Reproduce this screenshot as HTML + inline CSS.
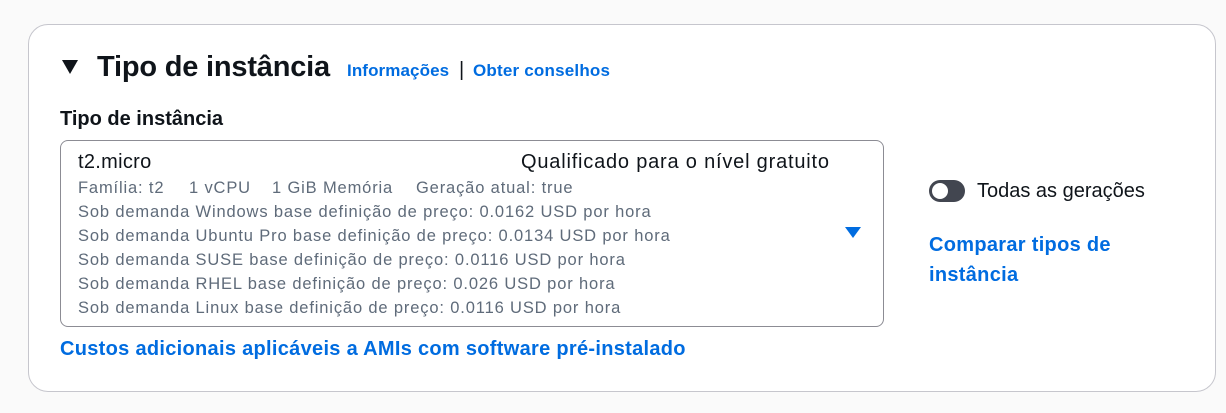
<!DOCTYPE html>
<html><head><meta charset="utf-8"><style>
body{margin:0;background:#fafafa;width:1226px;height:413px;overflow:hidden;font-family:"Liberation Sans",sans-serif;color:#0f141a;position:relative}
.card{position:absolute;left:28px;top:24px;width:1188px;height:368px;background:#fff;border:1px solid #c6c6cd;border-radius:20px;box-sizing:border-box}
.a{position:absolute;white-space:nowrap}
.blue{color:#006ce0;font-weight:bold}
.sel{position:absolute;left:60px;top:140px;width:824px;height:187px;border:1px solid #8c8c94;border-radius:8px;box-sizing:border-box}
.g{color:#5f6b7a;font-size:16.5px;position:absolute;left:78px;white-space:nowrap;letter-spacing:0.85px}
</style></head><body>
<div class="card"></div>
<svg class="a" style="left:61px;top:59px" width="18" height="16"><path d="M1 1H17L9 15Z" fill="#0f141a"/></svg>
<div class="a" style="left:97px;top:51px;font-size:29px;font-weight:bold;letter-spacing:-0.2px">Tipo de instância</div>
<div class="a blue" style="left:347px;top:61px;font-size:17px;letter-spacing:0.1px">Informações</div>
<div class="a" style="left:459px;top:59px;font-size:20px">|</div>
<div class="a blue" style="left:473px;top:61px;font-size:17px;letter-spacing:0.2px">Obter conselhos</div>
<div class="a" style="left:60px;top:108px;font-size:20px;font-weight:bold">Tipo de instância</div>
<div class="sel"></div>
<div class="a" style="left:78px;top:151px;font-size:20px;letter-spacing:0.3px">t2.micro</div>
<div class="a" style="left:521px;top:151px;font-size:20px;letter-spacing:0.8px">Qualificado para o nível gratuito</div>
<div class="g" style="top:179px">Família: t2</div>
<div class="g" style="top:179px;left:189px">1 vCPU</div>
<div class="g" style="top:179px;left:272px">1 GiB Memória</div>
<div class="g" style="top:179px;left:416px">Geração atual: true</div>
<div class="g" style="top:203px">Sob demanda Windows base definição de preço: 0.0162 USD por hora</div>
<div class="g" style="top:227px">Sob demanda Ubuntu Pro base definição de preço: 0.0134 USD por hora</div>
<div class="g" style="top:251px">Sob demanda SUSE base definição de preço: 0.0116 USD por hora</div>
<div class="g" style="top:275px">Sob demanda RHEL base definição de preço: 0.026 USD por hora</div>
<div class="g" style="top:299px">Sob demanda Linux base definição de preço: 0.0116 USD por hora</div>
<svg class="a" style="left:845px;top:227px" width="16" height="12"><path d="M0 0H16L8 11Z" fill="#006ce0"/></svg>
<div class="a" style="left:929px;top:180px;width:36px;height:22px;border-radius:11px;background:#424650"></div>
<div class="a" style="left:932px;top:183px;width:16px;height:16px;border-radius:8px;background:#fff"></div>
<div class="a" style="left:977px;top:180px;font-size:20px">Todas as gerações</div>
<div class="a blue" style="left:929px;top:230px;font-size:20px;line-height:30px;letter-spacing:0.3px">Comparar tipos de<br>instância</div>
<div class="a blue" style="left:60px;top:338px;font-size:20px;letter-spacing:0.3px">Custos adicionais aplicáveis a AMIs com software pré-instalado</div>
</body></html>
